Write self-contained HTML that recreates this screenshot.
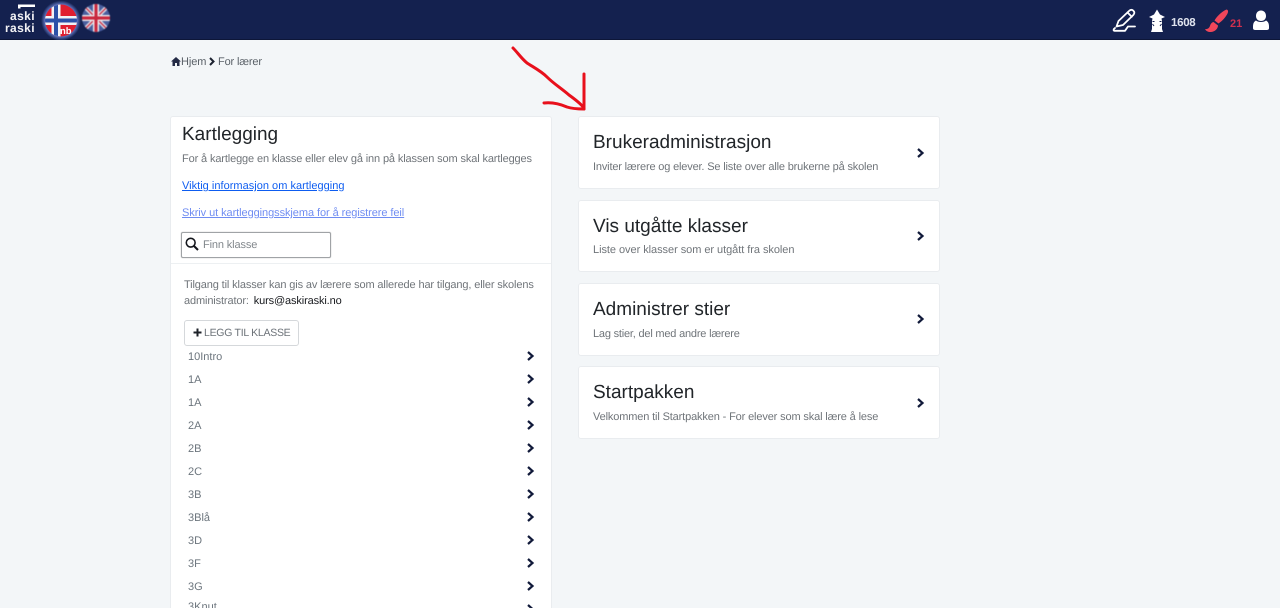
<!DOCTYPE html>
<html><head><meta charset="utf-8"><title>For lærer</title>
<style>
*{box-sizing:border-box}
html,body{margin:0;padding:0;width:1280px;height:608px;overflow:hidden;background:#f3f6f8;font-family:"Liberation Sans",sans-serif;color:#6c757d;text-rendering:geometricPrecision}
#w{position:relative;width:1280px;height:608px;overflow:hidden}
.a{position:absolute;white-space:nowrap}
.nav{position:absolute;left:0;top:0;width:1280px;height:40px;background:#14214f;border-bottom:1px solid #0d1638}
.card{position:absolute;background:#fff;border:1px solid #e9ecef;border-radius:3px}
.t{position:absolute;left:14px;font-size:19px;color:#212529;white-space:nowrap;line-height:24px}
.s{position:absolute;left:14px;font-size:11px;letter-spacing:-.17px;color:#6f7479;white-space:nowrap;line-height:16px}
.l{font-size:11px;letter-spacing:-.13px}
.c{position:absolute}
.li{position:absolute;left:188px;font-size:11px;color:#6c757d;line-height:14px}
.ch{position:absolute}
</style></head><body><div id="w">
<div class="nav"></div>

<!-- logo -->
<svg class="c" style="left:0;top:0" width="40" height="40"><path d="M18 8.500 V4.500 H35 V7 H20.500 V8.500 Z" fill="#fff" /></svg>
<div class="a" style="left:0;top:11px;width:35px;text-align:right;font-size:12px;line-height:11.500px;font-weight:700;color:#f2f2f5;letter-spacing:.4px">aski<br>raski</div>

<!-- nb flag -->
<svg class="c" style="left:40px;top:0;filter:blur(.35px)" width="42" height="40" viewBox="0 0 42 40">
<defs><clipPath id="n"><circle cx="21" cy="20.500" r="16"/></clipPath>
<radialGradient id="g"><stop offset=".75" stop-color="#6f86d8"/><stop offset="1" stop-color="#14214f"/></radialGradient></defs>
<circle cx="21" cy="20.500" r="20" fill="url(#g)"/>
<g clip-path="url(#n)"><rect width="42" height="40" fill="#e01e30"/><rect x="11.500" width="9" height="40" fill="#f1f1f5"/><rect y="16" width="42" height="9" fill="#f1f1f5"/><rect x="14" width="4" height="40" fill="#2b50a8"/><rect y="18.500" width="42" height="4" fill="#2b50a8"/></g>
<text x="20" y="34" font-family="Liberation Sans" font-size="9.500" font-weight="700" fill="#fff">nb</text>
</svg>

<!-- uk flag -->
<svg class="c" style="left:82px;top:4px;filter:blur(.4px)" width="28" height="28" viewBox="0 0 28 28">
<defs><clipPath id="k"><circle cx="14" cy="14" r="14"/></clipPath></defs>
<g clip-path="url(#k)"><rect width="28" height="28" fill="#4a5f9e"/>
<path d="M0 0L28 28M28 0L0 28" stroke="#dfe2ea" stroke-width="4"/>
<path d="M0 0L28 28M28 0L0 28" stroke="#c9283e" stroke-width="1.300"/>
<path d="M14 0V28M0 14H28" stroke="#eceef2" stroke-width="6"/>
<path d="M14 0V28M0 14H28" stroke="#c9283e" stroke-width="3.200"/></g></svg>

<!-- right icons -->
<svg class="c" style="left:1112px;top:8px" width="26" height="26" viewBox="0 0 26 26" fill="none" stroke="#fff" stroke-width="1.800" stroke-linejoin="round" stroke-linecap="round">
<path d="M4.500 18.500 L6.500 13 L17 3 C18.500 1.500 20 1.500 21.300 2.700 C22.700 4 22.700 5.500 21.300 7 L11 17 Z"/>
<path d="M15.500 4.500 L19.800 8.800"/>
<path d="M3 20 C1.500 21 1 22.800 2.500 22.800 H13 L16 18.500 H23"/>
</svg>
<svg class="c" style="left:1147px;top:9px" width="20" height="24" viewBox="0 0 20 24"><path d="M10 0.500 L13 5.500 L18 8 L14.500 9.500 L15 12 L15 20 L16 23 L4 23 L5 20 L5 12 L5.500 9.500 L2 8 L7 5.500 Z" fill="#fff"/><path d="M5.500 12.500 L7.500 12.500 M5.500 15 L7 17 M14.500 12.500 L12.500 12.500 M14.500 15 L13 17" stroke="#14214f" stroke-width="1"/></svg>
<div class="a" style="left:1171px;top:16px;font-size:11.500px;letter-spacing:-.3px;line-height:14px;font-weight:700;color:#dfe3ee">1608</div>
<svg class="c" style="left:1204px;top:8px" width="25" height="25" viewBox="0 0 25 25"><path d="M22.500 1.500 C24.500 2 24.500 4 23 6.500 C21 10 17.500 13.500 14.500 15.500 L10.500 12.500 C12.500 9 17 4 22.500 1.500 Z" fill="#f0465a"/><path d="M9.500 14 L14 17.500 C14 20.500 11 24 6.500 24 C4 24 2 23 1 21 C3 21.500 5 20.500 6 18 C6.500 16 7.500 14.500 9.500 14 Z" fill="#f0465a"/></svg>
<div class="a" style="left:1230px;top:17px;font-size:11px;line-height:14px;font-weight:700;color:#d1304f">21</div>
<svg class="c" style="left:1252px;top:10px" width="18" height="21" viewBox="0 0 18 21"><path d="M9 0.500 C12.300 0.500 14 3 14 6 C14 9 12 11 9 11 C6 11 4 9 4 6 C4 3 5.700 0.500 9 0.500 Z M4 10.500 C6 12.500 12 12.500 14 10.500 C16 11.500 17 13.500 17 16.500 V18 C17 19.500 16 20 14.500 20 H3.500 C2 20 1 19.500 1 18 V16.500 C1 13.500 2 11.500 4 10.500 Z" fill="#fff"/></svg>

<!-- breadcrumb -->
<svg class="c" style="left:171px;top:57px" width="10" height="9" viewBox="0 0 10 9"><path d="M5 0 L10 4.500 H8.500 V9 H6 V6 H4 V9 H1.500 V4.500 H0 Z" fill="#232a45"/></svg>
<div class="a" style="left:181px;top:55px;font-size:11px;letter-spacing:-.1px;line-height:14px;color:#585f66">Hjem</div>
<svg class="c" style="left:208px;top:57px" width="8" height="9" viewBox="0 0 8 9"><path d="M2 1 L5.500 4.500 L2 8" fill="none" stroke="#1c2230" stroke-width="2"/></svg>
<div class="a" style="left:218px;top:55px;font-size:11px;letter-spacing:-.15px;line-height:14px;color:#585f66">For lærer</div>

<!-- arrow -->
<svg class="c" style="left:505px;top:40px" width="90" height="80" viewBox="0 0 90 80" fill="none" stroke="#e8101c" stroke-width="3" stroke-linecap="round" stroke-linejoin="round">
<path d="M8 8 C13 13 16 18 22 23 C28 27 36 31 42 37 C49 44 56 48 64 55 C71 60 76 64 79 68"/>
<path d="M79 34 C79 45 79 58 79 69"/>
<path d="M39 63 C48 62 55 64 62 67 C68 69 74 69 79 69"/>
</svg>

<!-- left card -->
<div class="card" style="left:170px;top:116px;width:382px;height:520px"></div>
<div class="a" style="left:182px;top:123px;font-size:19px;line-height:24px;color:#212529">Kartlegging</div>
<div class="a l" style="left:182px;top:152px;line-height:15px;color:#6f7479">For å kartlegge en klasse eller elev gå inn på klassen som skal kartlegges</div>
<div class="a l" style="left:182px;top:179px;letter-spacing:.02px;line-height:15px;color:#0d5cf0;text-decoration:underline">Viktig informasjon om kartlegging</div>
<div class="a l" style="left:182px;top:206px;letter-spacing:-.07px;line-height:15px;color:#6f8cf2;text-decoration:underline">Skriv ut kartleggingsskjema for å registrere feil</div>
<div class="c" style="left:181px;top:232px;width:150px;height:26px;border:1px solid #a0a3a6;border-radius:2px;background:#fff;box-shadow:0 0 1px #aaa"></div>
<svg class="c" style="left:185px;top:237px" width="14" height="14" viewBox="0 0 14 14" fill="none" stroke="#14161c" stroke-width="1.600"><circle cx="5.700" cy="5.700" r="4.400"/><path d="M9 9 L13 13" stroke-width="2"/></svg>
<div class="a l" style="left:203px;top:238px;line-height:14px;color:#80868b">Finn klasse</div>
<div class="c" style="left:171px;top:263px;width:380px;height:1px;background:#edf0f2"></div>
<div class="a l" style="left:184px;top:277px;line-height:16px;color:#6f7479">Tilgang til klasser kan gis av lærere som allerede har tilgang, eller skolens<br>administrator: <span style="color:#16181c;margin-left:2px">kurs@askiraski.no</span></div>
<div class="c" style="left:184px;top:320px;width:115px;height:26px;border:1px solid #d5d8db;border-radius:3px;background:#fff"></div>
<svg class="c" style="left:193px;top:328px" width="9" height="9" viewBox="0 0 9 9"><path d="M4.500 0.500V8.500M0.500 4.500H8.500" stroke="#1e2229" stroke-width="2"/></svg>
<div class="a" style="left:204px;top:326px;font-size:10.500px;letter-spacing:-.27px;line-height:14px;color:#6c7278">LEGG TIL KLASSE</div>

<div class="li" style="top:350px">10Intro</div><svg class="ch" style="left:526px;top:351px" width="9" height="10" viewBox="0 0 9 10"><path d="M2 1 L6.500 5 L2 9" fill="none" stroke="#111a3a" stroke-width="2.200"/></svg>
<div class="li" style="top:373px">1A</div><svg class="ch" style="left:526px;top:374px" width="9" height="10" viewBox="0 0 9 10"><path d="M2 1 L6.500 5 L2 9" fill="none" stroke="#111a3a" stroke-width="2.200"/></svg>
<div class="li" style="top:396px">1A</div><svg class="ch" style="left:526px;top:397px" width="9" height="10" viewBox="0 0 9 10"><path d="M2 1 L6.500 5 L2 9" fill="none" stroke="#111a3a" stroke-width="2.200"/></svg>
<div class="li" style="top:419px">2A</div><svg class="ch" style="left:526px;top:420px" width="9" height="10" viewBox="0 0 9 10"><path d="M2 1 L6.500 5 L2 9" fill="none" stroke="#111a3a" stroke-width="2.200"/></svg>
<div class="li" style="top:442px">2B</div><svg class="ch" style="left:526px;top:443px" width="9" height="10" viewBox="0 0 9 10"><path d="M2 1 L6.500 5 L2 9" fill="none" stroke="#111a3a" stroke-width="2.200"/></svg>
<div class="li" style="top:465px">2C</div><svg class="ch" style="left:526px;top:466px" width="9" height="10" viewBox="0 0 9 10"><path d="M2 1 L6.500 5 L2 9" fill="none" stroke="#111a3a" stroke-width="2.200"/></svg>
<div class="li" style="top:488px">3B</div><svg class="ch" style="left:526px;top:489px" width="9" height="10" viewBox="0 0 9 10"><path d="M2 1 L6.500 5 L2 9" fill="none" stroke="#111a3a" stroke-width="2.200"/></svg>
<div class="li" style="top:511px">3Blå</div><svg class="ch" style="left:526px;top:512px" width="9" height="10" viewBox="0 0 9 10"><path d="M2 1 L6.500 5 L2 9" fill="none" stroke="#111a3a" stroke-width="2.200"/></svg>
<div class="li" style="top:534px">3D</div><svg class="ch" style="left:526px;top:535px" width="9" height="10" viewBox="0 0 9 10"><path d="M2 1 L6.500 5 L2 9" fill="none" stroke="#111a3a" stroke-width="2.200"/></svg>
<div class="li" style="top:557px">3F</div><svg class="ch" style="left:526px;top:558px" width="9" height="10" viewBox="0 0 9 10"><path d="M2 1 L6.500 5 L2 9" fill="none" stroke="#111a3a" stroke-width="2.200"/></svg>
<div class="li" style="top:580px">3G</div><svg class="ch" style="left:526px;top:581px" width="9" height="10" viewBox="0 0 9 10"><path d="M2 1 L6.500 5 L2 9" fill="none" stroke="#111a3a" stroke-width="2.200"/></svg>
<div class="li" style="top:600px">3Knut</div><svg class="ch" style="left:526px;top:604px" width="9" height="10" viewBox="0 0 9 10"><path d="M2 1 L6.500 5 L2 9" fill="none" stroke="#111a3a" stroke-width="2.200"/></svg>

<!-- right cards -->
<div class="card" style="left:578px;top:116px;width:362px;height:73px"><div class="t" style="top:14px">Brukeradministrasjon</div><div class="s" style="top:42px">Inviter lærere og elever. Se liste over alle brukerne på skolen</div></div>
<div class="card" style="left:578px;top:200px;width:362px;height:72px"><div class="t" style="top:14px">Vis utgåtte klasser</div><div class="s" style="top:41px;letter-spacing:-.05px">Liste over klasser som er utgått fra skolen</div></div>
<div class="card" style="left:578px;top:283px;width:362px;height:73px"><div class="t" style="top:14px">Administrer stier</div><div class="s" style="top:42px;letter-spacing:-.2px">Lag stier, del med andre lærere</div></div>
<div class="card" style="left:578px;top:366px;width:362px;height:73px"><div class="t" style="top:14px">Startpakken</div><div class="s" style="top:42px;letter-spacing:-.14px">Velkommen til Startpakken - For elever som skal lære å lese</div></div>
<svg class="ch" style="left:916px;top:148px" width="9" height="10" viewBox="0 0 9 10"><path d="M2 1 L6.500 5 L2 9" fill="none" stroke="#111a3a" stroke-width="2.200"/></svg>
<svg class="ch" style="left:916px;top:231px" width="9" height="10" viewBox="0 0 9 10"><path d="M2 1 L6.500 5 L2 9" fill="none" stroke="#111a3a" stroke-width="2.200"/></svg>
<svg class="ch" style="left:916px;top:314px" width="9" height="10" viewBox="0 0 9 10"><path d="M2 1 L6.500 5 L2 9" fill="none" stroke="#111a3a" stroke-width="2.200"/></svg>
<svg class="ch" style="left:916px;top:398px" width="9" height="10" viewBox="0 0 9 10"><path d="M2 1 L6.500 5 L2 9" fill="none" stroke="#111a3a" stroke-width="2.200"/></svg>
</div></body></html>
